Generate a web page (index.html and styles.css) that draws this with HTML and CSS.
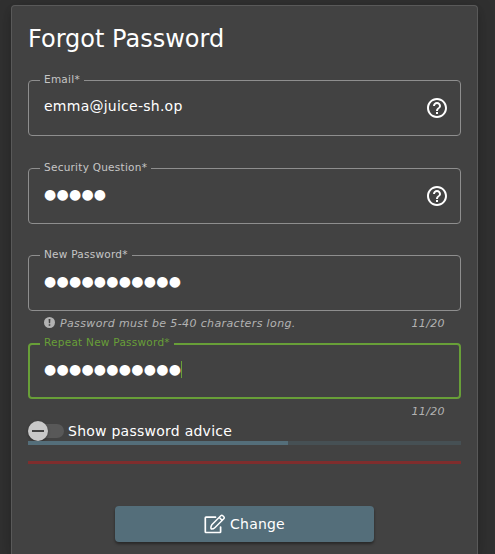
FILE: index.html
```
<!DOCTYPE html>
<html lang="en">
<head>
<meta charset="utf-8">
<title>Forgot Password</title>
<link rel="stylesheet" href="styles.css">
</head>
<body>
<main class="card">
  <h1 class="title">Forgot Password</h1>
  <div class="field">
    <span class="label">Email*</span>
    <span class="value">emma@juice-sh.op</span>
    <svg class="help" viewBox="0 0 24 24"><path d="M11 18h2v-2h-2v2zm1-16C6.480 2 2 6.480 2 12s4.480 10 10 10 10-4.480 10-10S17.520 2 12 2zm0 18c-4.410 0-8-3.590-8-8s3.590-8 8-8 8 3.590 8 8-3.590 8-8 8zm0-14c-2.210 0-4 1.790-4 4h2c0-1.100.9-2 2-2s2 .9 2 2c0 2-3 1.750-3 5h2c0-2.250 3-2.500 3-5 0-2.210-1.790-4-4-4z"/></svg>
  </div>
  <div class="field question">
    <span class="label">Security Question*</span>
    <span class="value dots">●●●●●</span>
    <svg class="help" viewBox="0 0 24 24"><path d="M11 18h2v-2h-2v2zm1-16C6.480 2 2 6.480 2 12s4.480 10 10 10 10-4.480 10-10S17.520 2 12 2zm0 18c-4.410 0-8-3.590-8-8s3.590-8 8-8 8 3.590 8 8-3.590 8-8 8zm0-14c-2.210 0-4 1.790-4 4h2c0-1.100.9-2 2-2s2 .9 2 2c0 2-3 1.750-3 5h2c0-2.250 3-2.500 3-5 0-2.210-1.790-4-4-4z"/></svg>
  </div>
  <div class="field password">
    <span class="label">New Password*</span>
    <span class="value dots">●●●●●●●●●●●</span>
  </div>
  <div class="hint">
    <svg class="info" viewBox="0 0 11 11"><circle cx="5.500" cy="5.500" r="5.500" fill="#b3b3b3"/><path d="M4.600 2h1.800l-.25 4.300h-1.300zM4.700 7.200h1.600v1.500H4.700z" fill="#424242"/></svg>
    <em>Password must be 5-40 characters long.</em>
    <em class="count">11/20</em>
  </div>
  <div class="field focused">
    <span class="label">Repeat New Password*</span>
    <span class="value dots">●●●●●●●●●●●</span><span class="caret"></span>
  </div>
  <div class="hint"><em class="count">11/20</em></div>
  <div class="toggle">
    <span class="track"><span class="thumb"></span></span>
    <span>Show password advice</span>
  </div>
  <div class="progress"><div class="bar"></div></div>
  <div class="strength"></div>
  <button class="change">
    <svg class="edit" viewBox="0 0 22 20" fill="none" stroke="#fff" stroke-linejoin="round" stroke-linecap="round"><path stroke-width="1.700" d="M11.500 3.200H2q-.7 0-.7.7V17.800q0 .7.7.7H15.900q.7 0 .7-.7V13"/><path stroke-width="1.500" d="M7.200 15q-.8-2 .6-4.200L16.800 1.800q1-1 2 0l1 1q1 1 0 2L10.800 13.700Q9.300 15.200 7.200 15zM15.300 3.500l2.900 2.900"/></svg>
    <span>Change</span>
  </button>
</main>
</body>
</html>
```

FILE: styles.css
```
* { box-sizing: border-box; }
html, body { height: 100%; }
body {
  margin: 0;
  padding: 5px 17px 0 11px;
  overflow: hidden;
  background: #303030;
  color: #fff;
  font-family: "DejaVu Sans", sans-serif;
  font-size: 14px;
}
.card {
  height: 100%;
  padding: 0 16px;
  display: flex;
  flex-direction: column;
  background: #424242;
  border: 1px solid #595959;
  border-bottom: 0;
  border-radius: 4px 4px 0 0;
  box-shadow: 0 6px 10px rgba(0, 0, 0, .14), 0 1px 18px rgba(0, 0, 0, .12);
}
.title {
  margin: 17px 0 25px;
  font-size: 24px;
  line-height: 32px;
  font-weight: 400;
}
.field {
  position: relative;
  flex: none;
  height: 56px;
  padding: 0 11px 0 15px;
  display: flex;
  align-items: center;
  border: 1px solid #8e8e8e;
  border-radius: 4px;
}
.question { margin-top: 32px; }
.password { margin-top: 31px; }
.label {
  position: absolute;
  left: 11px;
  top: -10px;
  padding: 0 4px;
  background: #424242;
  color: #c6c6c6;
  font-size: 10.5px;
  line-height: 16px;
  letter-spacing: .25px;
}
.value { padding-bottom: 4px; letter-spacing: .25px; }
.help { width: 24px; height: 24px; margin-left: auto; fill: #fff; }
.focused { border: 2px solid #689f38; padding-left: 14px; }
.focused .label { left: 10px; top: -11px; color: #689f38; }
.focused .dots { padding-bottom: 5px; }
.caret { width: 1px; height: 17px; margin-bottom: 4px; background: #689f38; }
.hint {
  flex: none;
  height: 32px;
  padding: 0 16px;
  display: flex;
  align-items: flex-start;
  color: #b3b3b3;
  font-size: 11px;
  line-height: 26px;
  letter-spacing: .37px;
}
.info { width: 11px; height: 11px; margin: 6px 5px 0 0; }
.count { margin-left: auto; }
.toggle {
  height: 20px;
  margin-top: -10px;
  display: flex;
  align-items: center;
  gap: 4px;
  letter-spacing: .25px;
}
.track {
  width: 36px;
  height: 14px;
  display: flex;
  align-items: center;
  background: #585858;
  border-radius: 7px;
}
.thumb {
  width: 20px;
  height: 20px;
  flex: none;
  display: flex;
  align-items: center;
  justify-content: center;
  background: #c8c8c8;
  border-radius: 50%;
  box-shadow: 0 1px 3px rgba(0, 0, 0, .35);
}
.thumb::after { content: ""; width: 12px; height: 2px; background: #424242; }
.progress { flex: none; height: 4px; background: #465054; }
.bar { width: 60%; height: 4px; background: #546e7a; }
.strength { flex: none; height: 3px; margin-top: 16px; background: #7f2d2d; }
.change {
  flex: none;
  width: 259px;
  height: 36px;
  margin: 42px auto 0;
  padding: 0;
  display: flex;
  align-items: center;
  justify-content: center;
  gap: 4px;
  border: 0;
  border-radius: 4px;
  background: #546e7a;
  color: #fff;
  font: 14px "DejaVu Sans", sans-serif;
  letter-spacing: .2px;
  box-shadow: 0 2px 3px rgba(0, 0, 0, .4);
}
.edit { width: 22px; height: 20px; }
```
